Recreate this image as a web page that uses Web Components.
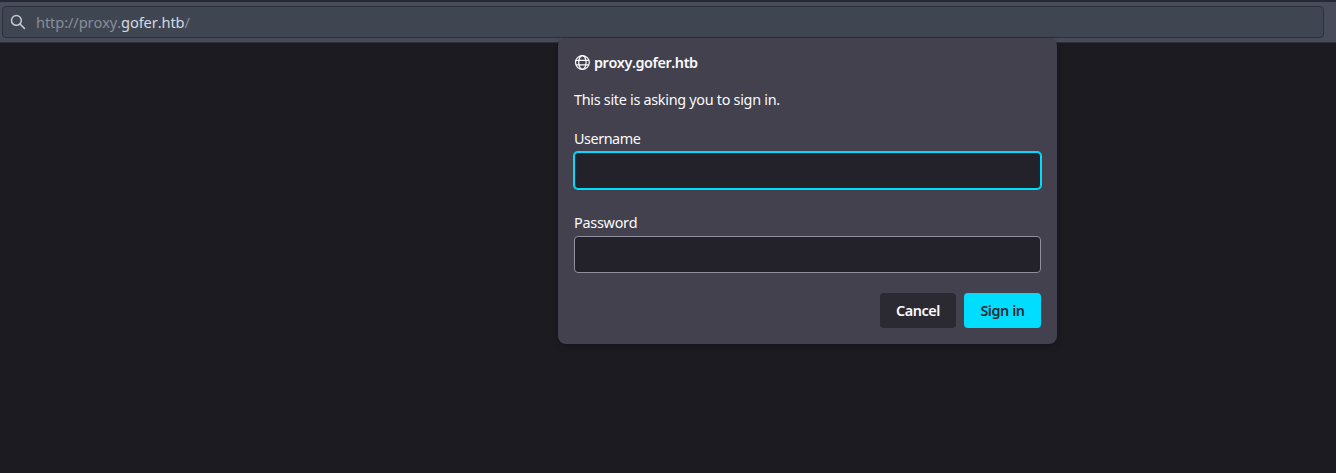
<!DOCTYPE html>
<html lang="en">
<head>
<meta charset="utf-8">
<title>Sign in</title>
<style>
html,body{height:100%;margin:0}
body{background:#1c1b22;overflow:hidden;font:14.4px/20px "Noto Sans",sans-serif;font-kerning:none;color:#fbfbfe}
</style>
</head>
<body>
<browser-window>
  <url-bar slot="toolbar" scheme="http://" sub="proxy." host="gofer.htb" path="/"></url-bar>
  <auth-dialog site="proxy.gofer.htb">
    <auth-field label="Username" active style="letter-spacing:-.45px"></auth-field>
    <auth-field label="Password" style="letter-spacing:-.25px"></auth-field>
    <auth-button slot="actions" style="width:76px">Cancel</auth-button>
    <auth-button slot="actions" primary style="width:77px">Sign in</auth-button>
  </auth-dialog>
</browser-window>
<script>
class BaseElement extends HTMLElement {
  connectedCallback() {
    if (!this.shadowRoot) this.attachShadow({mode: 'open'}).innerHTML = this.render();
  }
}
customElements.define('browser-window', class extends BaseElement {
  render() { return `<style>
    :host{display:block;position:relative;height:100%;overflow:hidden}
    header{box-sizing:border-box;height:43px;padding:4px 12px 4px 2px;background:#484b59;border-top:2px solid #252933;border-bottom:1px solid #2e303c}
    ::slotted(auth-dialog){position:absolute;left:558px;top:38px}
  </style><header><slot name="toolbar"></slot></header><slot></slot>`; }
});
customElements.define('url-bar', class extends BaseElement {
  render() { const a = n => this.getAttribute(n); return `<style>
    :host{display:flex;align-items:center;box-sizing:border-box;height:32px;padding-left:7px;border:1px solid #2c303c;border-radius:4px;background:#404651;color:#898d98;font-size:14.67px;letter-spacing:-.12px}
    svg{width:16px;height:16px;margin-right:10px;flex:none}
    span{white-space:pre}
    b{font-weight:400;color:#d3dae3}
  </style><svg viewBox="0 0 16 16" fill="none" stroke="#c4cad5" stroke-width="1.5" stroke-linecap="round"><circle cx="6.4" cy="6.4" r="4.9"/><path d="M10 10 14.4 14.4"/></svg><span>${a('scheme')}${a('sub')}<b>${a('host')}</b>${a('path')}</span>`; }
});
customElements.define('auth-dialog', class extends BaseElement {
  render() { return `<style>
    :host{display:flex;flex-direction:column;box-sizing:border-box;width:499px;height:306px;padding:15px 16px 16px;background:#42414d;border-radius:8px;box-shadow:0 2px 6px rgba(0,0,0,.25)}
    h1{display:flex;align-items:center;gap:4px;height:20px;margin:0;font-size:14.4px;font-weight:600;letter-spacing:-.42px}
    svg{width:16px;height:16px;flex:none}
    p{margin:17px 0 19px;height:20px;letter-spacing:-.29px}
    section{display:flex;flex-direction:column;gap:24px}
    footer{display:flex;justify-content:flex-end;gap:8px;margin-top:auto}
  </style>
  <h1><svg viewBox="0 0 16 16" fill="none" stroke="#fbfbfe" stroke-width="1.25"><circle cx="8.4" cy="7.5" r="6.9"/><ellipse cx="8.4" cy="7.5" rx="3.7" ry="6.9"/><path d="M2 5.4h12.8M2 9.8h12.8"/></svg><span>${this.getAttribute('site')}</span></h1>
  <p>This site is asking you to sign in.</p>
  <section><slot></slot></section>
  <footer><slot name="actions"></slot></footer>`; }
});
customElements.define('auth-field', class extends BaseElement {
  render() { return `<style>
    :host{display:flex;flex-direction:column;gap:3px}
    label{height:20px}
    input{box-sizing:border-box;width:100%;height:37px;margin:0;border:1px solid #8f8f9d;border-radius:4px;background:#23222b;color:#fbfbfe;outline:0}
    :host([active]) input{border-color:#00ddff;box-shadow:0 0 0 1px #00ddff}
  </style><label for="f">${this.getAttribute('label')}</label><input id="f">`; }
});
customElements.define('auth-button', class extends BaseElement {
  render() { return `<style>
    :host{display:block}
    button{display:block;width:100%;height:35px;padding:0;border:0;border-radius:4px;background:#2b2a33;color:#fbfbfe;font:600 14.4px/20px "Noto Sans",sans-serif;letter-spacing:-.42px}
    :host([primary]) button{background:#00ddff;color:#2b2a33}
  </style><button><slot></slot></button>`; }
});
</script>
</body>
</html>
